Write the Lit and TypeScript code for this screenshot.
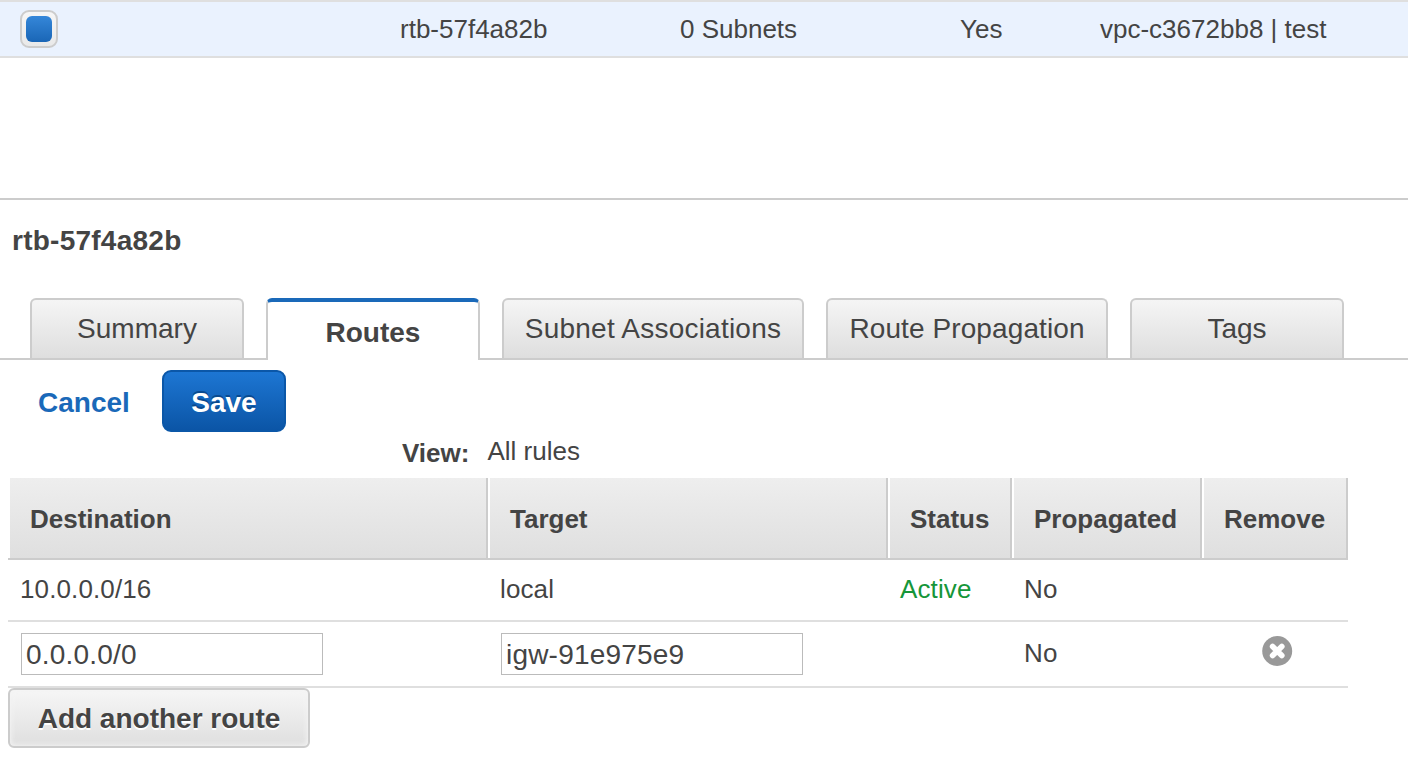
import { LitElement, html, css } from "lit";
import { customElement, state } from "lit/decorators.js";

@customElement("app-root")
export class AppRoot extends LitElement {
  static styles = css`
    :host {
      display: block;
      width: 1408px;
      height: 770px;
      overflow: hidden;
      background: #fff;
      color: #444;
      font: 26px/30px "Liberation Sans", Arial, sans-serif;
    }
    * {
      box-sizing: border-box;
    }
    .item {
      display: grid;
      grid-template-columns: 380px 280px 280px 140px 1fr;
      align-items: center;
      height: 58px;
      padding-left: 20px;
      background: #eaf2fe;
      border-top: 2px solid #dfdfdf;
      border-bottom: 2px solid #dfdfdf;
      white-space: nowrap;
    }
    .check {
      display: grid;
      place-items: center;
      width: 38px;
      height: 38px;
      border: 2px solid #ccc;
      border-radius: 9px;
      background: linear-gradient(#f6f6f6, #e9e9e9);
    }
    .check-fill {
      width: 26px;
      height: 26px;
      border-radius: 6px;
      background: linear-gradient(#3587d9, #1a66b6);
    }
    .panel {
      margin-top: 140px;
      border-top: 2px solid #ccc;
    }
    .title {
      margin: 0;
      padding: 25px 0 0 12px;
      font-size: 28px;
      line-height: 32px;
      letter-spacing: 0.25px;
    }
    .tabs {
      display: flex;
      gap: 22px;
      height: 62px;
      margin-top: 41px;
      padding-left: 30px;
      background: linear-gradient(#ccc, #ccc) bottom / 100% 2px no-repeat;
      font-size: 28px;
    }
    .tab {
      display: flex;
      align-items: center;
      justify-content: center;
      width: 214px;
      height: 60px;
      padding-bottom: 1px;
      border: 2px solid #ccc;
      border-bottom: 0;
      border-radius: 6px 6px 0 0;
      background: linear-gradient(#f5f5f5, #dedede);
      white-space: nowrap;
    }
    .tab.wide {
      width: 302px;
      letter-spacing: 0.22px;
    }
    .tab.mid {
      width: 282px;
      letter-spacing: 0.1px;
    }
    .tab.active {
      height: 62px;
      padding: 4px 0 0;
      border-top: 4px solid #1a69b9;
      background: #fff;
      font-weight: bold;
    }
    .actions {
      display: flex;
      align-items: center;
      gap: 32px;
      padding: 10px 0 0 38px;
      font-size: 28px;
      font-weight: bold;
    }
    .cancel {
      width: 92px;
      padding-top: 4px;
      color: #1a69b9;
    }
    .save {
      display: grid;
      place-items: center;
      width: 124px;
      height: 62px;
      padding-top: 4px;
      border: 2px solid #0b57a8;
      border-radius: 9px;
      background: linear-gradient(#1d76d3, #0b55a6);
      color: #fff;
      text-shadow: 0 -2px 0 #094a8f;
    }
    .view {
      display: flex;
      gap: 18px;
      height: 46px;
      padding: 4px 0 0 402px;
    }
    .view-label {
      padding-top: 2px;
      font-weight: bold;
    }
    .routes {
      width: 1340px;
      margin-left: 8px;
    }
    .row {
      display: grid;
      grid-template-columns: 480px 400px 124px 190px 146px;
      align-items: center;
      height: 62px;
      border-bottom: 2px solid #dfdfdf;
    }
    .row.head {
      align-items: stretch;
      height: 82px;
      border-color: #ccc;
      font-weight: bold;
    }
    .head-cell {
      display: flex;
      align-items: center;
      padding: 2px 0 0 20px;
      border-left: 2px solid #fff;
      border-right: 2px solid #ccc;
      background: linear-gradient(#eee, #dfdfdf);
    }
    .cell {
      padding: 0 0 2px 12px;
      letter-spacing: 0.12px;
    }
    .row.edit {
      height: 66px;
    }
    .row.edit .field-cell {
      padding: 0 0 0 13px;
    }
    .field {
      display: block;
      width: 302px;
      height: 42px;
      margin: 0;
      padding: 2px 4px 0;
      border: 1px solid #bbb;
      border-radius: 0;
      outline: 0;
      background: #fff;
      color: #444;
      font: 28px "Liberation Sans", Arial, sans-serif;
      letter-spacing: 0.2px;
    }
    .active-state {
      color: #169639;
    }
    .row.edit .remove {
      padding: 0 0 6px 60px;
    }
    .remove svg {
      display: block;
    }
    .add {
      display: grid;
      place-items: center;
      width: 302px;
      height: 60px;
      margin-left: 8px;
      padding-top: 2px;
      border: 2px solid #ccc;
      border-radius: 6px;
      background: linear-gradient(#f6f6f6, #dfdfdf);
      box-shadow: inset 0 0 5px 1px #f4f4f4;
      color: #444;
      font-size: 28px;
      font-weight: bold;
      text-shadow: 0 2px 0 #fff;
    }
  `;

  @state() private activeTab = "Routes";

  private tabs = [
    { name: "Summary", size: "" },
    { name: "Routes", size: "" },
    { name: "Subnet Associations", size: "wide" },
    { name: "Route Propagation", size: "mid" },
    { name: "Tags", size: "" },
  ];

  private columns = ["Destination", "Target", "Status", "Propagated", "Remove"];

  render() {
    return html`
      <div class="item">
        <div class="check"><div class="check-fill"></div></div>
        <span>rtb-57f4a82b</span>
        <span>0 Subnets</span>
        <span>Yes</span>
        <span>vpc-c3672bb8 | test</span>
      </div>
      <section class="panel">
        <h2 class="title">rtb-57f4a82b</h2>
        <nav class="tabs">
          ${this.tabs.map(
            (t) => html`<div
              class="tab ${t.size} ${t.name === this.activeTab ? "active" : ""}"
              @click=${() => (this.activeTab = t.name)}
            >${t.name}</div>`
          )}
        </nav>
        <div class="actions">
          <span class="cancel">Cancel</span>
          <div class="save" role="button">Save</div>
        </div>
        <div class="view">
          <span class="view-label">View:</span>
          <span>All rules</span>
        </div>
        <div class="routes">
          <div class="row head">
            ${this.columns.map((c) => html`<div class="head-cell">${c}</div>`)}
          </div>
          <div class="row">
            <div class="cell">10.0.0.0/16</div>
            <div class="cell">local</div>
            <div class="cell active-state">Active</div>
            <div class="cell">No</div>
            <div class="cell"></div>
          </div>
          <div class="row edit">
            <div class="cell field-cell"><input class="field" .value=${"0.0.0.0/0"} /></div>
            <div class="cell field-cell"><input class="field" .value=${"igw-91e975e9"} /></div>
            <div class="cell"></div>
            <div class="cell">No</div>
            <div class="cell remove">
              <svg width="31" height="30" viewBox="0 0 31 30">
                <circle cx="15.2" cy="15" r="15" fill="#999" />
                <path d="M10.6 10.4l9.2 9.2M19.8 10.4l-9.2 9.2" stroke="#fff" stroke-width="5.6" stroke-linecap="round" />
              </svg>
            </div>
          </div>
        </div>
        <div class="add" role="button">Add another route</div>
      </section>
    `;
  }
}
